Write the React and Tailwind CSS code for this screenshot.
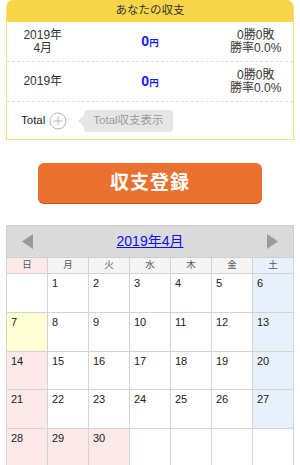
import React from 'react';

const font = { fontFamily: '"Liberation Sans", "Noto Sans CJK JP", sans-serif' };

const weekdays = ['日', '月', '火', '水', '木', '金', '土'];

// 2019年4月 — 1日は月曜
const weeks = [
  [null, 1, 2, 3, 4, 5, 6],
  [7, 8, 9, 10, 11, 12, 13],
  [14, 15, 16, 17, 18, 19, 20],
  [21, 22, 23, 24, 25, 26, 27],
  [28, 29, 30, null, null, null, null],
];
const rowHeights = ['h-[39px]', 'h-[39px]', 'h-[38px]', 'h-[39px]', 'h-[38px]'];
const holidays = [29, 30];
const today = 7;

function cellBg(day, col) {
  if (day === today) return 'bg-[#ffffd6]';
  if (day && holidays.includes(day)) return 'bg-[#fce9ea]';
  if (day && col === 0) return 'bg-[#fce9ea]';
  if (day && col === 6) return 'bg-[#e7f0fb]';
  return 'bg-white';
}

function SummaryRow({ label }) {
  return (
    <div className="flex items-center h-[40px] border-b border-dashed border-[#dddddd] text-[12px] leading-[13px] text-[#333]">
      <div className="w-1/4 text-center">{label}</div>
      <div className="w-1/2 text-center font-bold text-[#1a1aff]">
        <span className="text-[14px]">0</span>
        <span className="text-[9.5px]">円</span>
      </div>
      <div className="w-1/4 text-center pr-[3px]">
        <div>0勝0敗</div>
        <div>勝率0.0%</div>
      </div>
    </div>
  );
}

export default function App() {
  return (
    <div className="w-[300px] h-[465px] bg-white overflow-hidden" style={font}>
      {/* あなたの収支 */}
      <div className="ml-[6px] w-[288px] border border-t-0 border-[#f6e07c] rounded-t-[7px] overflow-hidden">
        <div className="h-[22px] bg-[#f6d648] flex items-center justify-center text-[11.5px] text-[#333]">
          あなたの収支
        </div>
        <SummaryRow label={<>2019年<br />4月</>} />
        <SummaryRow label="2019年" />
        <div className="flex items-center h-[37px] pl-[14px]">
          <span className="text-[11.5px] text-[#222]">Total</span>
          <svg className="ml-[4px]" width="18" height="18" viewBox="0 0 18 18">
            <circle cx="9" cy="9" r="8" fill="none" stroke="#b5b5b5" strokeWidth="1" />
            <path d="M9 4.5v9M4.5 9h9" stroke="#b5b5b5" strokeWidth="1" />
          </svg>
          <div className="relative ml-[17px] h-[22px] px-[9px] flex items-center bg-[#e6e6e6] rounded-[4px] text-[11.5px] text-[#9a9a9a]">
            <span className="absolute left-[-6px] top-1/2 -translate-y-1/2 w-0 h-0 border-y-[6px] border-y-transparent border-r-[6px] border-r-[#e6e6e6]" />
            Total収支表示
          </div>
        </div>
      </div>

      {/* 収支登録 */}
      <div className="flex justify-center mt-[23px]">
        <button className="w-[224px] h-[40px] rounded-[6px] bg-[#e9702e] shadow-[0_1px_0_#c4591d] text-white text-[19px] font-bold tracking-[1px]">
          収支登録
        </button>
      </div>

      {/* カレンダー */}
      <div className="ml-[6px] mt-[22px] w-[288px]">
        <div className="h-[33px] bg-[#dadada] border border-[#cfcfcf] flex items-center justify-between px-[15px]">
          <svg width="11" height="15" viewBox="0 0 11 15">
            <path d="M11 0v15L0 7.5z" fill="#9a9a9a" />
          </svg>
          <span className="text-[14px] text-[#1010ee] underline">2019年4月</span>
          <svg width="11" height="15" viewBox="0 0 11 15">
            <path d="M0 0v15l11-7.5z" fill="#9a9a9a" />
          </svg>
        </div>
        <div className="grid grid-cols-[repeat(7,41px)] border-l border-[#d4d4d4]">
          {weekdays.map((w, i) => (
            <div
              key={w}
              className={`h-[16px] border-r border-b border-[#d4d4d4] flex items-center justify-center text-[9.5px] text-[#555] ${
                i === 0 ? 'bg-[#fce9ea]' : i === 6 ? 'bg-[#e7f0fb]' : 'bg-[#f5f5f5]'
              }`}
            >
              {w}
            </div>
          ))}
          {weeks.map((week, r) =>
            week.map((day, c) => (
              <div
                key={`${r}-${c}`}
                className={`${rowHeights[r]} border-r border-b border-[#d4d4d4] px-[4px] pt-[3px] text-[11px] leading-[12px] text-[#222] ${cellBg(day, c)}`}
              >
                {day}
              </div>
            ))
          )}
        </div>
      </div>
    </div>
  );
}
